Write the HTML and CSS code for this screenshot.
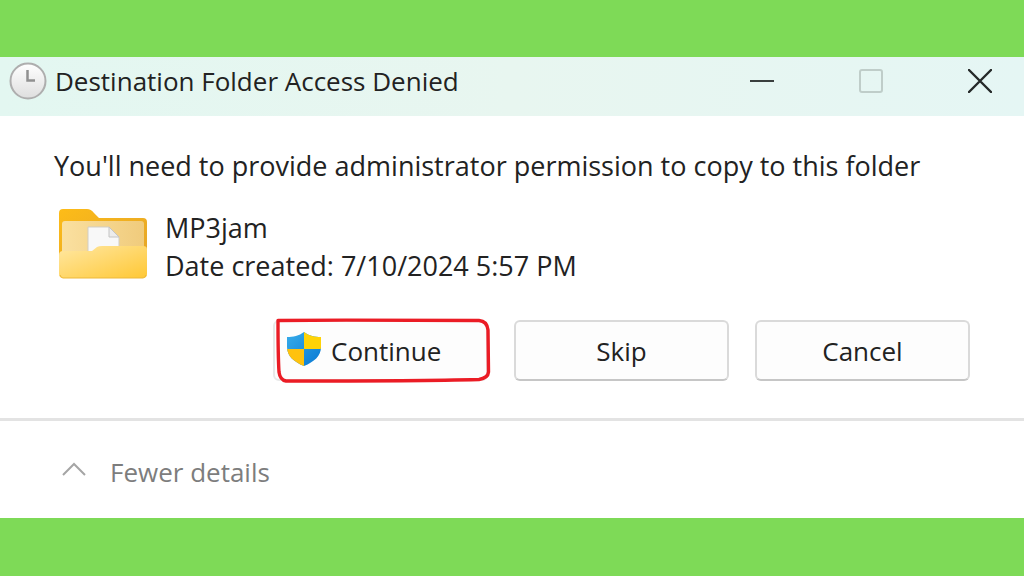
FILE: index.html
```html
<!DOCTYPE html>
<html lang="en">
<head>
<meta charset="utf-8">
<meta name="viewport" content="width=device-width, initial-scale=1">
<title>Destination Folder Access Denied</title>
<link rel="stylesheet" href="styles.css">
</head>
<body>
<main class="dialog">
  <header class="titlebar">
    <svg class="clock" viewBox="0 0 38 38" aria-hidden="true">
      <defs><linearGradient id="face" x2="0" y2="1"><stop stop-color="#fff"/><stop offset="1" stop-color="#dedede"/></linearGradient></defs>
      <circle cx="19" cy="19" r="17.5" fill="url(#face)" stroke="#aeaeae" stroke-width="2"/>
      <path d="M18.500 8V18.500H26" fill="none" stroke="#909090" stroke-width="2.500"/>
    </svg>
    <h1 class="title">Destination Folder Access Denied</h1>
    <div class="window-controls">
      <button class="window-button" type="button" aria-label="Minimize"><svg viewBox="0 0 24 24"><path d="M0 12H24" stroke="#3a3f3e" stroke-width="2"/></svg></button>
      <button class="window-button" type="button" aria-label="Maximize" disabled><svg viewBox="0 0 24 24"><rect x="1" y="1" width="22" height="22" rx="2" fill="none" stroke="#bfcdc9" stroke-width="2"/></svg></button>
      <button class="window-button" type="button" aria-label="Close"><svg viewBox="0 0 24 24"><path d="M1 1L23 23M23 1L1 23" stroke="#252928" stroke-width="2.400" stroke-linecap="round"/></svg></button>
    </div>
  </header>
  <section class="content">
    <p class="message">You'll need to provide administrator permission to copy to this folder</p>
    <div class="item">
      <svg class="folder" viewBox="0 0 88 70" aria-hidden="true">
        <defs>
          <linearGradient id="back" x2="1" y2="1"><stop stop-color="#fdbc18"/><stop offset="1" stop-color="#e2a22a"/></linearGradient>
          <linearGradient id="inside" x2="1" y2="0"><stop stop-color="#fae0a0"/><stop offset="1" stop-color="#f0cb7c"/></linearGradient>
          <linearGradient id="front" x2="1" y2="1"><stop stop-color="#ffe7a2"/><stop offset="1" stop-color="#ffc835"/></linearGradient>
        </defs>
        <path d="M0 4Q0 0 4 0H28Q32 0 35 4L40 9H84Q88 9 88 13V60H0Z" fill="url(#back)"/>
        <path d="M3 15Q3 12 6 12H82Q85 12 85 15V60H3Z" fill="url(#inside)"/>
        <path d="M29 18H50L60 28V50H29Z" fill="#f8f8f8" stroke="#d0cdc5"/>
        <path d="M50 18V28H60Z" fill="#ececec" stroke="#c4c4c4"/>
        <path d="M0 46Q0 42 4 42H33L38 38Q40 37 43 37H84Q88 37 88 40V65Q88 69 84 69H4Q0 69 0 65Z" fill="url(#front)"/>
        <path d="M1 66Q2 69 4 69H84Q86 69 87 66" fill="none" stroke="#edb83a"/>
      </svg>
      <div class="item-text">
        <p>MP3jam</p>
        <p>Date created: 7/10/2024 5:57 PM</p>
      </div>
    </div>
    <div class="actions">
      <button class="action action-continue" type="button">
        <svg class="shield" viewBox="0 0 34 38" aria-hidden="true">
          <defs>
            <clipPath id="shield-shape"><path d="M17 0C22 4 28 5 34 5V15C34 24 27 30 17 34C7 30 0 24 0 15V5C6 5 12 4 17 0Z"/></clipPath>
            <linearGradient id="blue" x2="1" y2="1"><stop stop-color="#38adea"/><stop offset="1" stop-color="#0878d3"/></linearGradient>
          </defs>
          <g clip-path="url(#shield-shape)">
            <path d="M0 0H34V34H0Z" fill="url(#blue)"/>
            <path d="M17 0H34V17H17Z" fill="#ffd307"/>
            <path d="M0 17H17V34H0Z" fill="#ffc20d"/>
          </g>
        </svg>
        <span>Continue</span>
        <svg class="marker" viewBox="0 0 216 66" aria-hidden="true"><path d="M3 2.500C70 2 142 2 204 2.500Q212 3 213 12L213.500 54Q213 60 204 61.500C145 63 75 63 11 63Q5 62 4 54C3 38 3 20 3 2.500Z" fill="none" stroke="#eb1c25" stroke-width="3.400" stroke-linejoin="round"/></svg>
      </button>
      <button class="action" type="button">Skip</button>
      <button class="action" type="button">Cancel</button>
    </div>
  </section>
  <footer class="footer">
    <button class="details" type="button">
      <svg class="chevron" viewBox="0 0 24 20" aria-hidden="true"><path d="M1 13L12 2L23 13" fill="none" stroke="#a5a5a5" stroke-width="2"/></svg>
      <span>Fewer details</span>
    </button>
  </footer>
</main>
</body>
</html>
```
FILE: styles.css
```css
* {
  box-sizing: border-box;
}

body {
  min-height: 100vh;
  margin: 0;
  padding: 57px 0;
  background: #7eda57;
  color: #222;
  font-family: "Open Sans", "Noto Sans", sans-serif;
  font-size: 26px;
  line-height: 38px;
}

h1,
p {
  margin: 0;
}

button {
  padding: 0;
  border: 0;
  background: none;
  color: inherit;
  font: inherit;
}

svg {
  display: block;
}

.dialog {
  background: #fff;
}

.titlebar {
  display: flex;
  align-items: center;
  gap: 8px;
  padding: 5px 32px 16px 9px;
  background: linear-gradient(90deg, #e3f7f1, #e8f6f0 50%, #e5f6f4);
}

.clock {
  width: 38px;
  height: 38px;
}

.title {
  font-size: 26px;
  font-weight: 400;
}

.window-controls {
  display: flex;
  gap: 85px;
  margin-left: auto;
}

.window-button {
  width: 24px;
  height: 24px;
}

.window-button svg {
  width: 24px;
  height: 24px;
}

.content {
  padding: 31px 54px 37px;
}

.message,
.item-text {
  font-size: 27px;
}

.item {
  display: flex;
  gap: 18px;
  margin-top: 24px;
  padding-left: 5px;
}

.folder {
  width: 88px;
  height: 70px;
}

.actions {
  display: flex;
  justify-content: flex-end;
  gap: 26px;
  margin-top: 35px;
}

.action {
  flex: 0 1 215px;
  min-height: 61px;
  border: 2px solid #dadada;
  border-bottom-color: #c6c6c6;
  border-radius: 6px;
  background: #fdfdfd;
}

.action-continue {
  display: flex;
  position: relative;
  align-items: center;
  gap: 10px;
  padding: 0 12px;
  border-color: #e8e8e8;
}

.shield {
  width: 34px;
  height: 38px;
}

.marker {
  position: absolute;
  top: -4px;
  left: 0;
  width: 216px;
  height: 66px;
}

.footer {
  padding: 32px 62px 27px;
  border-top: 3px solid #e3e3e3;
}

.details {
  display: flex;
  align-items: center;
  gap: 24px;
  color: #7d7d7d;
}

.chevron {
  width: 24px;
  height: 20px;
}
```
